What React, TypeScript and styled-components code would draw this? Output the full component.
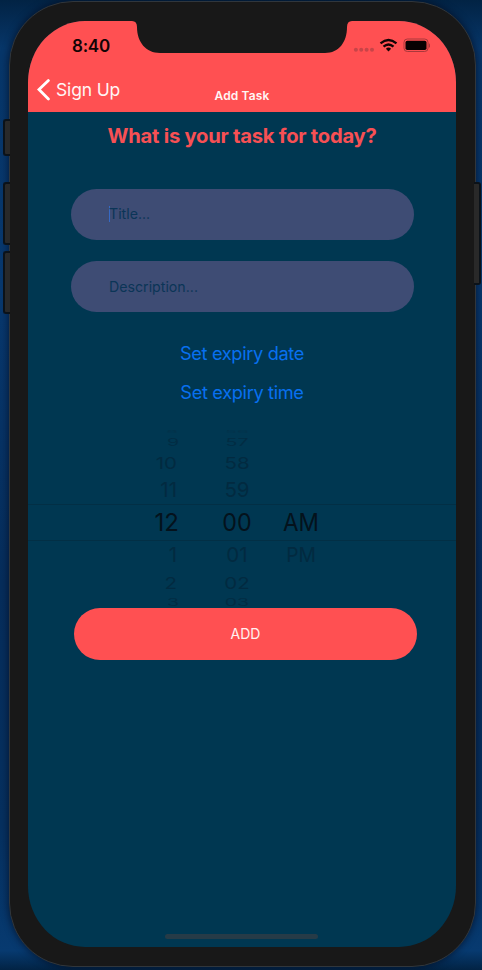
import React from "react";
import styled, { createGlobalStyle } from "styled-components";

const GlobalStyle = createGlobalStyle`
  * { box-sizing: border-box; }
  body {
    margin: 0;
    font-family: Inter, "Liberation Sans", sans-serif;
    overflow: hidden;
  }
`;

const Desktop = styled.div`
  position: relative;
  width: 482px;
  height: 970px;
  padding: 1px 6px 3px 9px;
  overflow: hidden;
  background: linear-gradient(180deg, #022344 0%, #073669 5%, #08386e 30%, #062d5b 60%, #06305f 85%, #073a70 98%, #022344 100%);
`;

const SideButton = styled.div<{ $side: "left" | "right"; $top: number; $height: number }>`
  position: absolute;
  z-index: 1;
  top: ${(p) => p.$top}px;
  ${(p) => p.$side}: ${(p) => (p.$side === "left" ? 3 : 1)}px;
  width: 7px;
  height: ${(p) => p.$height}px;
  border: 2px solid #0b1219;
  border-${(p) => (p.$side === "left" ? "right" : "left")}: 0;
  border-radius: ${(p) => (p.$side === "left" ? "3px 0 0 3px" : "0 3px 3px 0")};
  background: #292929;
`;

const Device = styled.div`
  position: relative;
  width: 467px;
  height: 966px;
  padding: 19px 18px 18px;
  border: 1px solid #30363c;
  border-radius: 64px;
  background: #181818;
  box-shadow: 0 0 7px 1px rgba(0, 10, 30, 0.6);
`;

const Screen = styled.main`
  position: relative;
  display: flex;
  flex-direction: column;
  width: 428px;
  height: 926px;
  border-radius: 57px / 61px;
  overflow: hidden;
  background: #003751;
`;

const Notch = styled.svg`
  position: absolute;
  top: 0;
  left: 104px;
`;

const Header = styled.header`
  flex: none;
  height: 91px;
  background: #ff5052;
`;

const StatusBar = styled.div`
  display: flex;
  justify-content: space-between;
  height: 50px;
  padding: 15px 26px 0 44px;
`;

const Clock = styled.span`
  font-size: 17px;
  font-weight: 600;
  line-height: 21px;
  letter-spacing: -0.25px;
  color: #120405;
`;

const NavBar = styled.nav`
  display: grid;
  grid-template-columns: 1fr auto 1fr;
  height: 41px;
  padding: 0 9px;
  color: #fff5f5;
`;

const BackButton = styled.button`
  display: flex;
  align-items: center;
  gap: 6px;
  height: 37px;
  padding: 0;
  border: 0;
  background: none;
  font: 400 17.5px/22px Inter, sans-serif;
  letter-spacing: -0.15px;
  color: inherit;
`;

const NavTitle = styled.span`
  padding-top: 17px;
  font-size: 12px;
  font-weight: 600;
  line-height: 16px;
  letter-spacing: 0.15px;
`;

const Content = styled.section`
  display: flex;
  flex-direction: column;
  align-items: center;
`;

const Heading = styled.h1`
  margin: 10px 0 40px;
  font-size: 20.2px;
  font-weight: 700;
  line-height: 27px;
  letter-spacing: -0.24px;
  white-space: nowrap;
  color: #f75054;
`;

const Field = styled.div`
  display: flex;
  align-items: center;
  width: 343px;
  height: 51.5px;
  margin: -0.5px 0 21.25px 0;
  padding: 0 0 1px 38.5px;
  border-radius: 26px;
  background: #3e4c74;
  font-size: 14.2px;
  letter-spacing: 0;
  color: #0b3557;
`;

const Caret = styled.i`
  width: 1px;
  height: 16px;
  margin-right: -1px;
  background: #3669c4;
`;

const LinkButton = styled.button`
  height: 39px;
  padding: 0;
  border: 0;
  background: none;
  font: 400 18.2px/24px Inter, sans-serif;
  letter-spacing: -0.34px;
  color: #0870ef;
`;

const Picker = styled.div`
  display: grid;
  grid-template-columns: 177px 64px 64px;
  grid-template-rows: 8px 13px 27.5px 28.5px 36px 29.5px 26.5px 11.5px;
  width: 100%;
  height: 180px;
  margin-top: 16px;
  overflow: hidden;
  background: linear-gradient(#022f45, #022f45) 0 76px / 100% 1px no-repeat,
    linear-gradient(#022f45, #022f45) 0 112px / 100% 1px no-repeat;
`;

const PickerCell = styled.span<{ $column: "hour" | "minute" | "period"; $size: number; $squash: number; $inset: number; $tone: string }>`
  display: flex;
  align-items: center;
  justify-content: ${(p) => (p.$column === "hour" ? "flex-end" : "center")};
  padding-right: ${(p) => (p.$column === "hour" ? p.$inset : 0)}px;
  min-height: 0;
  font-size: ${(p) => p.$size}px;
  line-height: 1;
  white-space: nowrap;
  color: ${(p) => p.$tone};
  transform: scale(${(p) => (p.$column === "period" ? 0.94 : p.$size === 24 && p.$column === "minute" ? 0.97 : 1)}, ${(p) => p.$squash});
`;

const AddButton = styled.button`
  flex: none;
  width: 343px;
  height: 52px;
  margin: 0 -7px 0 0;
  padding: 0;
  border: 0;
  border-radius: 26px;
  background: #ff5052;
  font: 400 14px/20px Inter, sans-serif;
  color: #fff0f0;
`;

const HomeIndicator = styled.div`
  flex: none;
  width: 153px;
  height: 5px;
  margin: auto auto 8px 137px;
  border-radius: 3px;
  background: #263b47;
`;

interface WheelRow {
  hour: string;
  minute: string;
  period?: string;
  size: number;
  squash: number;
  inset: number;
  tone: string;
}

const wheelRows: WheelRow[] = [
  { hour: "8", minute: "56", size: 19, squash: 0.15, inset: 27, tone: "#03324a" },
  { hour: "9", minute: "57", size: 19.5, squash: 0.5, inset: 26, tone: "#022c43" },
  { hour: "10", minute: "58", size: 20.5, squash: 0.8, inset: 28, tone: "#022a40" },
  { hour: "11", minute: "59", size: 20.5, squash: 1, inset: 28, tone: "#022a40" },
  { hour: "12", minute: "00", period: "AM", size: 24, squash: 1, inset: 26, tone: "#04121c" },
  { hour: "1", minute: "01", period: "PM", size: 20.5, squash: 1, inset: 28, tone: "#022a40" },
  { hour: "2", minute: "02", size: 20.5, squash: 0.8, inset: 28, tone: "#022a40" },
  { hour: "3", minute: "03", size: 19.5, squash: 0.5, inset: 26, tone: "#022c43" },
];

function StatusIcons() {
  return (
    <svg width="80" height="20" viewBox="0 0 80 20">
      <g fill="#c84448">
        <circle cx="5.9" cy="13.7" r="2" />
        <circle cx="11.2" cy="13.7" r="2" />
        <circle cx="16.6" cy="13.7" r="2" />
        <circle cx="22" cy="13.7" r="2" />
      </g>
      <g fill="none" stroke="#120405" strokeWidth="2.3">
        <path d="M30.5 7.3 Q38.5 0.8 46.5 7.3" />
        <path d="M33.5 10.7 Q38.5 6.3 43.5 10.7" />
      </g>
      <path d="M35.9 12.7 Q38.5 10.4 41.1 12.7 L38.5 15.5Z" fill="#120405" />
      <rect x="54" y="3" width="24" height="12.5" rx="3.3" fill="none" stroke="#a9383b" />
      <rect x="55.5" y="4.7" width="21" height="9.3" rx="1.8" fill="#080102" />
      <path d="M78.8 7 Q82 9.5 78.8 12Z" fill="#a9383b" />
    </svg>
  );
}

export default function App() {
  return (
    <>
      <GlobalStyle />
      <Desktop>
        <SideButton $side="left" $top={119} $height={37} />
        <SideButton $side="left" $top={182} $height={63} />
        <SideButton $side="left" $top={251} $height={63} />
        <SideButton $side="right" $top={182} $height={103} />
        <Device>
          <Screen>
            <Header>
              <StatusBar>
                <Clock>8:40</Clock>
                <StatusIcons />
              </StatusBar>
              <NavBar>
                <BackButton>
                  <svg width="13" height="22" viewBox="0 0 13 22">
                    <path d="M11.4 1.6 L2 10.6 L11.4 20" fill="none" stroke="#fff" strokeWidth="2.8" strokeLinecap="round" />
                  </svg>
                  Sign Up
                </BackButton>
                <NavTitle>Add Task</NavTitle>
              </NavBar>
            </Header>
            <Content>
              <Heading>What is your task for today?</Heading>
              <Field>
                <Caret />
                Title...
              </Field>
              <Field>Description...</Field>
              <LinkButton>Set expiry date</LinkButton>
              <LinkButton>Set expiry time</LinkButton>
              <Picker>
                {wheelRows.map((row) => {
                  const look = { $size: row.size, $squash: row.squash, $tone: row.tone, $inset: row.inset };
                  return (
                    <React.Fragment key={row.minute}>
                      <PickerCell $column="hour" {...look}>{row.hour}</PickerCell>
                      <PickerCell $column="minute" {...look}>{row.minute}</PickerCell>
                      <PickerCell $column="period" {...look}>{row.period}</PickerCell>
                    </React.Fragment>
                  );
                })}
              </Picker>
              <AddButton>ADD</AddButton>
            </Content>
            <HomeIndicator />
            <Notch width="220" height="33" viewBox="0 0 220 33">
              <path d="M0 0 Q5 0 5 6 C5 21 14 32 28 32 H193 C207 32 215 21 215 6 Q215 0 220 0Z" fill="#181818" />
            </Notch>
          </Screen>
        </Device>
      </Desktop>
    </>
  );
}
